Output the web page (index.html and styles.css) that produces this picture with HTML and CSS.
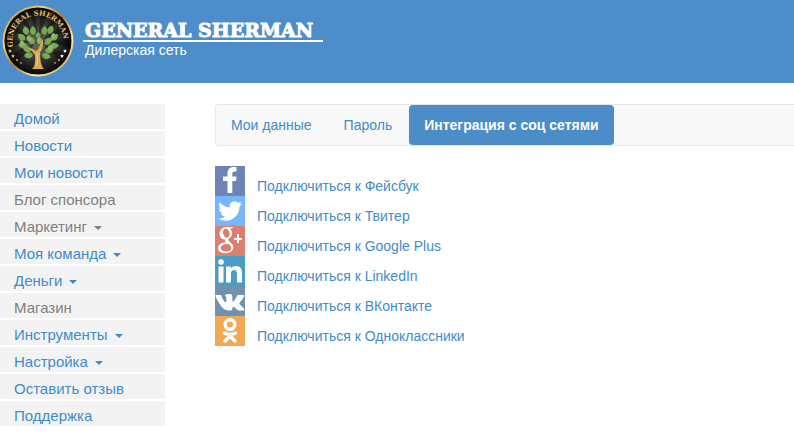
FILE: index.html
```html
<!DOCTYPE html>
<html lang="ru">
<head>
<meta charset="utf-8">
<meta name="viewport" content="width=device-width, initial-scale=1">
<title>General Sherman</title>
<link rel="stylesheet" href="styles.css">
</head>
<body>
<header class="header">
  <svg class="logo" viewBox="0 0 72 72" aria-hidden="true">
    <defs>
      <linearGradient id="gold" x1="0" y1="0" x2="1" y2="1">
        <stop offset="0" stop-color="#c48a2c"/>
        <stop offset=".3" stop-color="#f0cf80"/>
        <stop offset=".5" stop-color="#b37a25"/>
        <stop offset=".72" stop-color="#fff0b5"/>
        <stop offset="1" stop-color="#bd8424"/>
      </linearGradient>
      <radialGradient id="dark">
        <stop offset="0" stop-color="#6c6c69"/>
        <stop offset=".6" stop-color="#333331"/>
        <stop offset="1" stop-color="#070707"/>
      </radialGradient>
      <path id="arc" d="M11.200 42A25.500 25.500 0 1 1 60.800 42"/>
      <path id="leaf" d="M0 0C-4-2-4-6 0-9C4-6 4-2 0 0Z"/>
      <path id="star" d="M0-2L.6-.7L2-.6L.9.4L1.200 1.800L0 1L-1.200 1.800L-.9.4L-2-.6L-.6-.7Z"/>
    </defs>
    <circle cx="36" cy="36" r="35.500" fill="url(#gold)"/>
    <circle cx="36" cy="36" r="33.500" fill="url(#dark)"/>
    <g fill="#000" opacity=".35">
      <path d="M36 36L27 5L33 4ZM36 36L39 4L46 6ZM36 36L53 9L58 13ZM36 36L63 19L66 26ZM36 36L68 34L68 42ZM36 36L64 50L59 57ZM36 36L15 11L20 8ZM36 36L6 25L9 19ZM36 36L4 42L4 35ZM36 36L14 58L8 50Z"/>
    </g>
    <path d="M35 50L24 39M35 46L28 30M36 44L38 29M38 47L48 33M38 50L50 43" fill="none" stroke="#5d7c3c"/>
    <g fill="#78aa52">
      <use href="#leaf" transform="translate(31 30)"/>
      <use href="#leaf" transform="translate(25 30) rotate(-15)"/>
      <use href="#leaf" transform="translate(23 35) rotate(-50)"/>
      <use href="#leaf" transform="translate(25 41) rotate(-80)"/>
      <use href="#leaf" transform="translate(29 46) rotate(-65)"/>
      <use href="#leaf" transform="translate(32 39) rotate(-35)"/>
      <use href="#leaf" transform="translate(31 50) rotate(-95)"/>
      <use href="#leaf" transform="translate(42 30) rotate(5)"/>
      <use href="#leaf" transform="translate(47 29) rotate(20)"/>
      <use href="#leaf" transform="translate(49 35) rotate(50)"/>
      <use href="#leaf" transform="translate(48 41) rotate(85)"/>
      <use href="#leaf" transform="translate(43 39) rotate(50)"/>
      <use href="#leaf" transform="translate(43 46) rotate(80)"/>
      <use href="#leaf" transform="translate(40 50) rotate(105)"/>
      <use href="#leaf" transform="translate(35 33) rotate(15) scale(.7)"/>
    </g>
    <g fill="#8dba62">
      <use href="#leaf" transform="translate(28 37) rotate(-15) scale(.8)"/>
      <use href="#leaf" transform="translate(21 41) rotate(-20) scale(.7)"/>
      <use href="#leaf" transform="translate(37 39) rotate(5) scale(.8)"/>
      <use href="#leaf" transform="translate(51 34) rotate(5) scale(.7)"/>
      <use href="#leaf" transform="translate(46 45) rotate(45) scale(.8)"/>
    </g>
    <path fill="#d9a955" d="M30 64Q34 61 33 50Q31 46 26 43Q31 43 34 46Q37 44 38 40Q40 36 40 33Q43 39 38 48Q38 60 42 64Z"/>
    <path d="M35 61Q36 52 35 48" fill="none" stroke="#f2cc7b" stroke-width="1"/>
    <text class="logo-text"><textPath href="#arc">GENERAL SHERMAN</textPath></text>
    <g fill="#e7c55f">
      <use href="#star" transform="translate(8 46)"/>
      <use href="#star" transform="translate(11 51)"/>
      <use href="#star" transform="translate(15 55) scale(.7)"/>
      <use href="#star" transform="translate(19 58) scale(.6)"/>
      <use href="#star" transform="translate(57 55) scale(.7)"/>
      <use href="#star" transform="translate(53 58) scale(.6)"/>
    </g>
    <g fill="#fff">
      <use href="#star" transform="translate(63 46)"/>
      <use href="#star" transform="translate(60 51)"/>
    </g>
  </svg>
  <div class="brand">
    <a class="brand-name" href="#">GENERAL SHERMAN</a>
    <span class="brand-sub">Дилерская сеть</span>
  </div>
</header>
<div class="layout">
  <nav class="side" aria-label="Меню">
    <a href="#">Домой</a>
    <a href="#">Новости</a>
    <a href="#">Мои новости</a>
    <a class="muted" href="#">Блог спонсора</a>
    <a class="muted caret" href="#">Маркетинг</a>
    <a class="caret" href="#">Моя команда</a>
    <a class="caret" href="#">Деньги</a>
    <a class="muted" href="#">Магазин</a>
    <a class="caret" href="#">Инструменты</a>
    <a class="caret" href="#">Настройка</a>
    <a href="#">Оставить отзыв</a>
    <a href="#">Поддержка</a>
  </nav>
  <main class="main">
    <nav class="tabs" aria-label="Профиль">
      <a href="#">Мои данные</a>
      <a href="#">Пароль</a>
      <a class="active" href="#" aria-current="page">Интеграция с соц сетями</a>
    </nav>
    <ul class="social">
      <li><a href="#">
        <svg class="fb" viewBox="0 0 30 30" aria-hidden="true"><path d="M12.500 27V15H8V10.500H12.500V7.500C12.500 3 15 1 18.500 1H21.500V5.500H19.500C17.700 5.500 17.300 6.300 17.300 8V10.500H21.500L21 15H17.300V27Z"/></svg>
        <span>Подключиться к Фейсбук</span></a></li>
      <li><a href="#">
        <svg class="tw" viewBox="0 0 30 30" aria-hidden="true"><path transform="translate(3 3)" d="M23.950 4.570a10 10 0 0 1-2.820.77 4.960 4.960 0 0 0 2.160-2.720c-.95.550-2 .95-3.130 1.180a4.920 4.920 0 0 0-8.380 4.480C7.690 8.090 4.070 6.130 1.640 3.160a4.820 4.820 0 0 0-.67 2.480c0 1.710.87 3.210 2.190 4.100a4.900 4.900 0 0 1-2.230-.62v.06a4.920 4.920 0 0 0 3.950 4.830 5 5 0 0 1-2.210.08 4.940 4.940 0 0 0 4.600 3.420A9.870 9.870 0 0 1 0 19.540a13.990 13.990 0 0 0 7.560 2.210c9.050 0 14-7.500 14-13.980 0-.21 0-.42-.02-.63a9.940 9.940 0 0 0 2.410-2.570z"/></svg>
        <span>Подключиться к Твитер</span></a></li>
      <li><a href="#">
        <svg class="gp" viewBox="0 0 30 30" aria-hidden="true"><path fill-rule="evenodd" d="M18.500 1L16.500 2.500H14.500C18.500 6 17.700 10 14.500 12C12.500 13.500 13 14.500 15 16C18.500 18.500 19 21 17.500 24C14 29 3 28 3 22C3 18.500 6.500 16.500 11 16.500C10 15.500 9.800 14.500 10.300 13.500C2.500 14 2.500 1 11.500 1ZM11 2.500C6 2.500 8 12 12 11.800C16.500 11.500 14.500 2.500 11 2.500ZM11.700 18C4 18 3.800 25.500 11 25.500C18 25.500 17.500 20.500 13.300 18ZM22 8H24V12H27V14H24V17H22V14H19V12H22Z"/></svg>
        <span>Подключиться к Google Plus</span></a></li>
      <li><a href="#">
        <svg class="li" viewBox="0 0 30 30" aria-hidden="true"><circle cx="6" cy="6" r="2.800"/><path d="M3.500 10.500H8.500V26.500H3.500ZM11 10.500H15.800V12.500C17 10.700 18.800 10 21 10C25.500 10 27 13 27 17V26.500H22V18C22 15.500 21.200 14 19 14C16.700 14 16 15.700 16 18V26.500H11Z"/></svg>
        <span>Подключиться к LinkedIn</span></a></li>
      <li><a href="#">
        <svg class="vk" viewBox="0 0 30 30" aria-hidden="true"><path d="M1 9H6Q7.500 13.500 10 16.200Q11.500 17 11.500 14Q11.500 10.500 9.800 9.300Q11 7.800 15 8Q17.300 8 17.300 10V14.500Q17.500 16.500 19 14.700Q21 12.500 22.500 9H28Q30 9 28.700 11Q27.500 13.500 24.500 16.800Q24 17.500 24.700 18.200Q28 21 29.300 23.300Q29.500 24.500 28 24.500H24Q22.500 24.500 19.800 21.500Q17.500 19.500 17.300 22.500Q17.300 24.500 15.800 24.500Q8.500 25 5 18.500Q2 14 .3 10Q0 9 1 9Z"/></svg>
        <span>Подключиться к ВКонтакте</span></a></li>
      <li><a href="#">
        <svg class="ok" viewBox="0 0 30 30" aria-hidden="true"><g fill="none" stroke="#fff" stroke-width="3.500" stroke-linecap="round" stroke-linejoin="round"><circle cx="15" cy="8.500" r="4.800"/><path d="M9.500 17Q15 20 20.500 17M10 25L15 20L20 25"/></g></svg>
        <span>Подключиться к Одноклассники</span></a></li>
    </ul>
  </main>
</div>
</body>
</html>
```
FILE: styles.css
```css
* { box-sizing: border-box; }

body {
  margin: 0;
  background: #fff;
  color: #333;
  font: 14px/20px "Liberation Sans", Arial, sans-serif;
}

a {
  color: #428bca;
  text-decoration: none;
}

.header {
  display: flex;
  align-items: flex-start;
  gap: 9px;
  min-height: 83px;
  padding: 5px 2px;
  background: #4d8dca;
  color: #fff;
}

.logo {
  flex: none;
  width: 72px;
  height: 72px;
}

.logo-text {
  fill: #e3bc65;
  font: bold 7px "DejaVu Serif", serif;
}

.brand {
  display: flex;
  flex-direction: column;
  padding-top: 15px;
}

.brand-name {
  padding: 1px 10px 0 2px;
  border-bottom: 2px solid #fff;
  color: #fff;
  font: bold 19px/19px "DejaVu Serif", serif;
  -webkit-text-stroke: 1px #fff;
}

.brand-sub {
  padding-left: 2px;
  line-height: 16px;
}

.layout {
  display: flex;
  gap: 50px;
  padding-top: 21px;
}

.side {
  display: flex;
  flex: none;
  flex-direction: column;
  gap: 2px;
  width: 165px;
}

.side a {
  padding: 4px 14px 0;
  background: #f3f3f3;
  font-size: 15px;
  line-height: 21px;
}

.side .muted { color: #808080; }

.caret::after {
  content: "";
  display: inline-block;
  margin-left: 7px;
  border: 4px solid transparent;
  border-top-color: currentColor;
  border-bottom: 0;
  vertical-align: middle;
}

.main {
  flex: 1;
  min-width: 0;
}

.tabs {
  display: flex;
  gap: 2px;
  border: 1px solid #e7e7e7;
  border-right: 0;
  border-radius: 4px 0 0 4px;
  background: #f8f8f8;
}

.tabs a {
  padding: 10px 15px;
  border-radius: 4px;
}

.tabs .active {
  background: #4b8dc9;
  color: #fff;
  font-weight: bold;
}

.social {
  margin: 20px 0 0;
  padding: 0;
  list-style: none;
}

.social a {
  display: flex;
  gap: 12px;
  height: 30px;
}

.social span { padding-top: 10px; }

.social svg {
  flex: none;
  width: 30px;
  height: 30px;
  fill: #fff;
}

.fb { background: #6d84b4; }
.tw { background: #76b5ff; }
.gp { background: #d98070; }
.li { background: #4c9dc5; }
.vk { background: #7290b0; }
.ok { background: #f2a752; }
```
